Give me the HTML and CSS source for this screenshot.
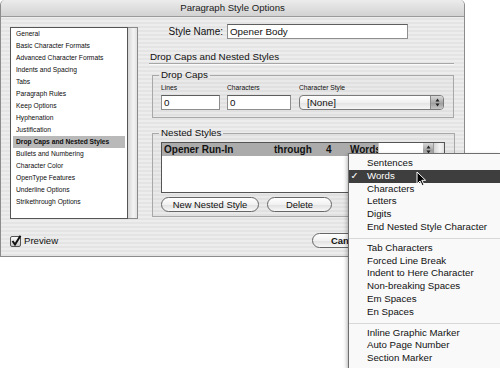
FILE: index.html
```html
<!DOCTYPE html>
<html lang="en">
<head>
<meta charset="UTF-8">
<meta name="viewport" content="width=device-width, initial-scale=1.0">
<title>Paragraph Style Options</title>
<link rel="stylesheet" href="styles.css">
</head>
<body>

<div class="dialog">
  <div class="titlebar">Paragraph Style Options</div>

  <div class="dialog-body">
    <!-- Category list -->
    <div class="sidebar">
      <ul class="category-list">
        <li>General</li>
        <li>Basic Character Formats</li>
        <li>Advanced Character Formats</li>
        <li>Indents and Spacing</li>
        <li>Tabs</li>
        <li>Paragraph Rules</li>
        <li>Keep Options</li>
        <li>Hyphenation</li>
        <li>Justification</li>
        <li class="selected">Drop Caps and Nested Styles</li>
        <li>Bullets and Numbering</li>
        <li>Character Color</li>
        <li>OpenType Features</li>
        <li>Underline Options</li>
        <li>Strikethrough Options</li>
      </ul>
      <div class="scroll-track"></div>
    </div>

    <!-- Settings panel -->
    <div class="panel">
      <div class="name-row">
        <label class="name-label">Style Name:</label>
        <div class="text-field name-field">Opener Body</div>
      </div>

      <h2 class="section-title">Drop Caps and Nested Styles</h2>

      <fieldset class="group drop-caps">
        <legend>Drop Caps</legend>
        <div class="field field-lines">
          <span class="small-label">Lines</span>
          <div class="text-field">0</div>
        </div>
        <div class="field field-chars">
          <span class="small-label">Characters</span>
          <div class="text-field">0</div>
        </div>
        <div class="field field-style">
          <span class="small-label">Character Style</span>
          <div class="popup">
            <span class="popup-value">[None]</span>
            <span class="stepper">
              <svg width="5" height="9" viewBox="0 0 5 9"><path d="M2.5 0.5 L4.5 3.5 L0.5 3.5 Z M0.5 5.5 L4.5 5.5 L2.5 8.5 Z" fill="#222"/></svg>
            </span>
          </div>
        </div>
      </fieldset>

      <fieldset class="group nested">
        <legend>Nested Styles</legend>
        <div class="nested-table">
          <div class="nested-rows">
            <div class="nested-row selected">
              <span class="col-style">Opener Run-In</span>
              <span class="col-through">through</span>
              <span class="col-count">4</span>
              <span class="col-unit">Words</span>
              <span class="cell-popup"></span>
              <span class="cell-stepper">
                <svg width="5" height="9" viewBox="0 0 5 9"><path d="M2.5 0.5 L4.5 3.5 L0.5 3.5 Z M0.5 5.5 L4.5 5.5 L2.5 8.5 Z" fill="#222"/></svg>
              </span>
            </div>
          </div>
          <div class="table-track"></div>
        </div>
        <div class="button-row">
          <button class="pill btn-new">New Nested Style</button>
          <button class="pill btn-delete">Delete</button>
        </div>
      </fieldset>
    </div>
  </div>

  <div class="dialog-footer">
    <label class="preview">
      <svg class="checkbox" width="12" height="12" viewBox="0 0 12 12">
        <defs>
          <linearGradient id="cb" x1="0" y1="0" x2="0" y2="1">
            <stop offset="0" stop-color="#ffffff"/>
            <stop offset="1" stop-color="#c4c4c4"/>
          </linearGradient>
        </defs>
        <rect x="0.5" y="1.5" width="10" height="10" rx="1.5" fill="url(#cb)" stroke="#555"/>
        <path d="M2.5 6 L5 9.5 L10.5 0.8" fill="none" stroke="#111" stroke-width="2"/>
      </svg>
      Preview
    </label>
    <button class="pill btn-cancel">Cancel</button>
  </div>
</div>

<!-- Open popup menu for the nested style unit -->
<ul class="popup-menu">
  <li>Sentences</li>
  <li class="active"><span class="mark">&#10003;</span>Words</li>
  <li>Characters</li>
  <li>Letters</li>
  <li>Digits</li>
  <li>End Nested Style Character</li>
  <li class="sep"></li>
  <li>Tab Characters</li>
  <li>Forced Line Break</li>
  <li>Indent to Here Character</li>
  <li>Non-breaking Spaces</li>
  <li>Em Spaces</li>
  <li>En Spaces</li>
  <li class="sep"></li>
  <li>Inline Graphic Marker</li>
  <li>Auto Page Number</li>
  <li>Section Marker</li>
</ul>

<svg class="cursor" width="11" height="16" viewBox="0 0 11 16">
  <path d="M1 1 L1 13 L4 10 L6.2 14.6 L8 13.8 L5.8 9.3 L9.6 9.3 Z" fill="#000" stroke="#fff" stroke-width="1"/>
</svg>

</body>
</html>
```

FILE: styles.css
```css
body {
  margin: 0;
  width: 500px;
  height: 368px;
  overflow: hidden;
  position: relative;
  background: #ffffff;
  font-family: "Liberation Sans", Arial, sans-serif;
  color: #111;
}

/* Dialog window */
.dialog {
  width: 465px;
  height: 257px;
  box-sizing: border-box;
  border: 1px solid #8c8c8c;
  border-top: none;
  border-radius: 5px 5px 0 0;
  background: repeating-linear-gradient(#ededed 0, #ededed 2px, #e4e4e4 2px, #e4e4e4 4px);
  display: flex;
  flex-direction: column;
}

.titlebar {
  height: 16px;
  line-height: 16px;
  text-align: center;
  font-size: 9.6px;
  color: #1a1a1a;
  border-bottom: 1px solid #9a9a9a;
  border-radius: 5px 5px 0 0;
  background: linear-gradient(#ececec, #d2d2d2);
}

.dialog-body {
  display: flex;
  align-items: flex-start;
  padding: 7px 0 0 9px;
}

/* Left category list */
.sidebar {
  display: flex;
  margin-top: 3px;
  height: 192px;
}

.category-list {
  width: 118px;
  box-sizing: border-box;
  margin: 0;
  padding: 0 2px;
  list-style: none;
  background: #fff;
  border: 1px solid #555;
  font-size: 6.7px;
  color: #0c0c0c;
}

.category-list li {
  height: 12px;
  line-height: 12px;
  padding-left: 3px;
  white-space: nowrap;
}

.category-list li.selected {
  background: #b9b9b9;
  font-weight: bold;
}

.scroll-track {
  width: 9px;
  border: 1px solid #8a8a8a;
  border-left: none;
  background: linear-gradient(90deg, #d6d6d6, #f4f4f4 60%, #e2e2e2);
}

/* Right panel */
.panel {
  width: 305px;
  margin-left: 11px;
}

.name-row {
  display: flex;
  align-items: center;
  height: 15px;
}

.name-label {
  width: 74px;
  text-align: right;
  font-size: 10px;
  margin-right: 4px;
}

.text-field {
  height: 15px;
  box-sizing: border-box;
  background: #fff;
  border: 1px solid #8e8e8e;
  border-top-color: #5e5e5e;
  font-size: 9.8px;
  line-height: 13px;
  padding-left: 2px;
}

.name-field {
  width: 181px;
}

.section-title {
  margin: 12px 0 0;
  padding-left: 1px;
  font-size: 9.8px;
  font-weight: normal;
  line-height: 12px;
  border-bottom: 1px solid #a6a6a6;
  box-shadow: 0 1px 0 #fafafa;
}

/* Group boxes */
.group {
  margin: 5px 0 0 3px;
  padding: 0 9px 7px 8px;
  border: 1px solid #a8a8a8;
  background: rgba(0, 0, 0, 0.015);
}

.group legend {
  font-size: 9.8px;
  line-height: 12px;
  padding: 0 2px;
  margin-left: -2px;
}

.drop-caps {
  display: flex;
  padding-top: 2px;
}

.field {
  display: flex;
  flex-direction: column;
}

.small-label {
  font-size: 6.7px;
  line-height: 9px;
  margin-bottom: 3px;
  white-space: nowrap;
}

.field-lines { width: 59px; margin-right: 7px; }
.field-chars { width: 64px; margin-right: 8px; }
.field-style { width: 145px; }

.popup {
  height: 15px;
  box-sizing: border-box;
  display: flex;
  border: 1px solid #7a7a7a;
  border-radius: 4px;
  background: linear-gradient(#ffffff, #f0f0f0 50%, #e2e2e2 51%, #f6f6f6);
  overflow: hidden;
}

.popup-value {
  flex: 1;
  font-size: 9.8px;
  line-height: 13px;
  padding-left: 7px;
}

.stepper {
  width: 12px;
  display: flex;
  align-items: center;
  justify-content: center;
  border-left: 1px solid #8a8a8a;
  background: linear-gradient(#d8d8d8, #a9a9a9 50%, #999 51%, #c6c6c6);
}

/* Nested styles */
.nested {
  margin-top: 9px;
  padding-top: 3px;
  padding-bottom: 4px;
}

.nested-table {
  display: flex;
  width: 284px;
  height: 51px;
  box-sizing: border-box;
  border: 1px solid #555;
  background: #fff;
}

.nested-rows {
  flex: 1;
}

.nested-row {
  display: flex;
  height: 13px;
  line-height: 13px;
  font-size: 10px;
  font-weight: bold;
  border-bottom: 1px solid #fff;
}

.nested-row.selected {
  background: #ababab;
}

.col-style { width: 110px; padding-left: 2px; }
.col-through { width: 52px; }
.col-count { width: 24px; }
.col-unit { width: 28px; }

.cell-popup {
  width: 44px;
  background: #fff;
  border-left: 1px solid #c8c8c8;
}

.cell-stepper {
  width: 10px;
  display: flex;
  align-items: center;
  justify-content: center;
  background: linear-gradient(#d8d8d8, #a9a9a9 50%, #999 51%, #c6c6c6);
}

.table-track {
  width: 11px;
  border-left: 1px solid #9a9a9a;
  background: linear-gradient(90deg, #d6d6d6, #f4f4f4 60%, #e2e2e2);
}

.button-row {
  display: flex;
  margin-top: 4px;
}

.pill {
  height: 15px;
  box-sizing: border-box;
  padding: 0;
  border: 1px solid #666;
  border-radius: 8px;
  background: linear-gradient(#ffffff, #f1f1f1 50%, #e0e0e0 51%, #f7f7f7);
  font-family: "Liberation Sans", Arial, sans-serif;
  font-size: 9.4px;
  color: #111;
}

.btn-new { width: 98px; margin-right: 8px; }
.btn-delete { width: 65px; }

/* Footer */
.dialog-footer {
  display: flex;
  align-items: center;
  margin-top: 14px;
  padding: 0 10px 0 9px;
  height: 15px;
}

.preview {
  display: flex;
  align-items: center;
  font-size: 9.6px;
}

.checkbox {
  margin-right: 2px;
}

.btn-cancel {
  width: 74px;
  margin: 0 68px 0 auto;
  font-weight: bold;
  text-align: left;
  padding-left: 18px;
}

/* Popup menu overlay */
.popup-menu {
  position: absolute;
  left: 348px;
  top: 153px;
  width: 152px;
  height: 215px;
  box-sizing: border-box;
  margin: 0;
  padding: 3px 0 0;
  list-style: none;
  background: #f9f9f9;
  border: 1px solid #6e6e6e;
  border-right: none;
  border-bottom: none;
  box-shadow: -1px 2px 4px rgba(0, 0, 0, 0.3);
  font-size: 9.7px;
  color: #111;
}

.popup-menu li {
  height: 12.8px;
  line-height: 12.8px;
  padding-left: 18px;
  white-space: nowrap;
}

.popup-menu li.sep {
  height: 0;
  margin: 4px 0 3px;
  border-top: 1px solid #d8d8d8;
}

.popup-menu li.active {
  background: #3e3e3e;
  color: #fff;
}

.mark {
  display: inline-block;
  width: 9px;
  margin-left: -17px;
  margin-right: 8px;
  text-align: center;
  font-family: "DejaVu Sans", sans-serif;
  font-size: 9.5px;
  font-weight: bold;
}

.cursor {
  position: absolute;
  left: 416px;
  top: 171px;
}
```
